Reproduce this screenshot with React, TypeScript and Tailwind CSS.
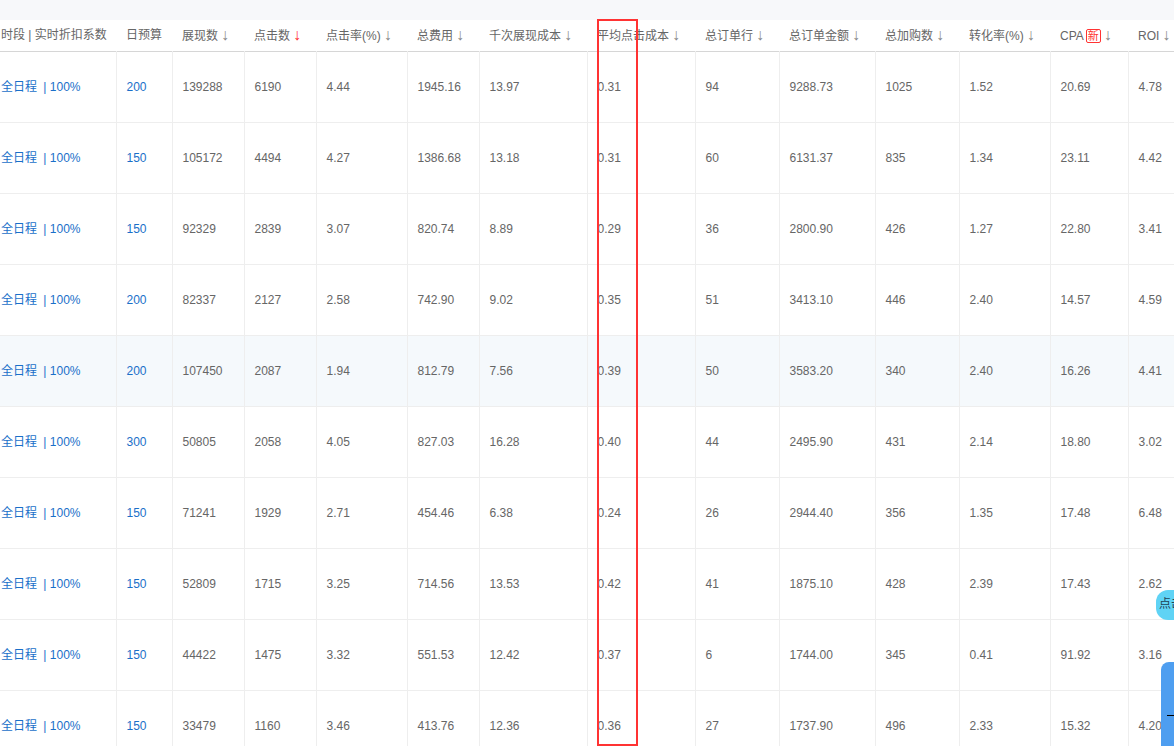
const cols = [
  { t: "时段 | 实时折扣系数", w: 116, arrow: false },
  { t: "日预算", w: 56, arrow: false },
  { t: "展现数", w: 72, arrow: true },
  { t: "点击数", w: 72, arrow: true, red: true },
  { t: "点击率(%)", w: 91, arrow: true },
  { t: "总费用", w: 72, arrow: true },
  { t: "千次展现成本", w: 108, arrow: true },
  { t: "平均点击成本", w: 108, arrow: true },
  { t: "总订单行", w: 84, arrow: true },
  { t: "总订单金额", w: 96, arrow: true },
  { t: "总加购数", w: 84, arrow: true },
  { t: "转化率(%)", w: 91, arrow: true },
  { t: "CPA", w: 78, arrow: true, isNew: true },
  { t: "ROI", w: 60, arrow: true },
];

const rows = [
  ["200", "139288", "6190", "4.44", "1945.16", "13.97", "0.31", "94", "9288.73", "1025", "1.52", "20.69", "4.78"],
  ["150", "105172", "4494", "4.27", "1386.68", "13.18", "0.31", "60", "6131.37", "835", "1.34", "23.11", "4.42"],
  ["150", "92329", "2839", "3.07", "820.74", "8.89", "0.29", "36", "2800.90", "426", "1.27", "22.80", "3.41"],
  ["200", "82337", "2127", "2.58", "742.90", "9.02", "0.35", "51", "3413.10", "446", "2.40", "14.57", "4.59"],
  ["200", "107450", "2087", "1.94", "812.79", "7.56", "0.39", "50", "3583.20", "340", "2.40", "16.26", "4.41"],
  ["300", "50805", "2058", "4.05", "827.03", "16.28", "0.40", "44", "2495.90", "431", "2.14", "18.80", "3.02"],
  ["150", "71241", "1929", "2.71", "454.46", "6.38", "0.24", "26", "2944.40", "356", "1.35", "17.48", "6.48"],
  ["150", "52809", "1715", "3.25", "714.56", "13.53", "0.42", "41", "1875.10", "428", "2.39", "17.43", "2.62"],
  ["150", "44422", "1475", "3.32", "551.53", "12.42", "0.37", "6", "1744.00", "345", "0.41", "91.92", "3.16"],
  ["150", "33479", "1160", "3.46", "413.76", "12.36", "0.36", "27", "1737.90", "496", "2.33", "15.32", "4.20"],
];

const total = cols.reduce((s, c) => s + c.w, 0);

export default function App() {
  return (
    <div className="relative w-[1174px] h-[746px] overflow-hidden bg-white text-[12px] text-[#666]" style={{ fontFamily: '"Liberation Sans", "Noto Sans CJK SC", sans-serif' }}>
      <div className="h-[20px] bg-[#f7f8fa]" />
      <table className="table-fixed border-collapse" style={{ width: total }}>
        <colgroup>
          {cols.map((c, i) => <col key={i} style={{ width: c.w }} />)}
        </colgroup>
        <thead>
          <tr className="h-[31px] border-b border-[#d6d6d6]">
            {cols.map((c, i) => (
              <th key={i} className={`font-normal text-left whitespace-nowrap text-[#666] ${i === 0 ? "pl-[1px]" : "pl-[10px]"}`}>
                {c.t}
                {c.isNew && <span className="ml-[2px] inline-block border border-[#f33] text-[#f33] text-[11px] leading-[12px] px-[1px] rounded-[2px]">新</span>}
                {c.arrow && <span className={`ml-[3px] text-[16px] font-light ${c.red ? "text-[#f33]" : "text-[#888]"}`}>↓</span>}
              </th>
            ))}
          </tr>
        </thead>
        <tbody>
          {rows.map((r, ri) => (
            <tr key={ri} className={`h-[71px] border-b border-[#eee] ${ri === 4 ? "bg-[#f5f9fc]" : ""}`}>
              <td className="pl-[1px] border-r border-[#eee] text-[#1a6fc9] whitespace-nowrap">
                全日程 <span className="ml-[3px]">| 100%</span>
              </td>
              {r.map((v, ci) => (
                <td key={ci} className={`pl-[10px] border-r border-[#eee] whitespace-nowrap ${ci === 0 ? "text-[#1a6fc9]" : ""}`}>{v}</td>
              ))}
            </tr>
          ))}
        </tbody>
      </table>
      <div className="absolute left-[597px] top-[19px] w-[41px] h-[727px] border-2 border-[#f33]" />
      <div className="absolute left-[1156px] top-[590px] w-[40px] h-[30px] rounded-[12px] bg-[#5fd3f5] text-[12px] text-[#245] pl-[3px] pt-[5px]">点击</div>
      <div className="absolute left-[1161px] top-[662px] w-[30px] h-[90px] rounded-t-[8px] bg-[#4e9ef0]" />
      <div className="absolute left-[1167px] top-[715px] w-[8px] h-[1px] bg-black" />
    </div>
  );
}
